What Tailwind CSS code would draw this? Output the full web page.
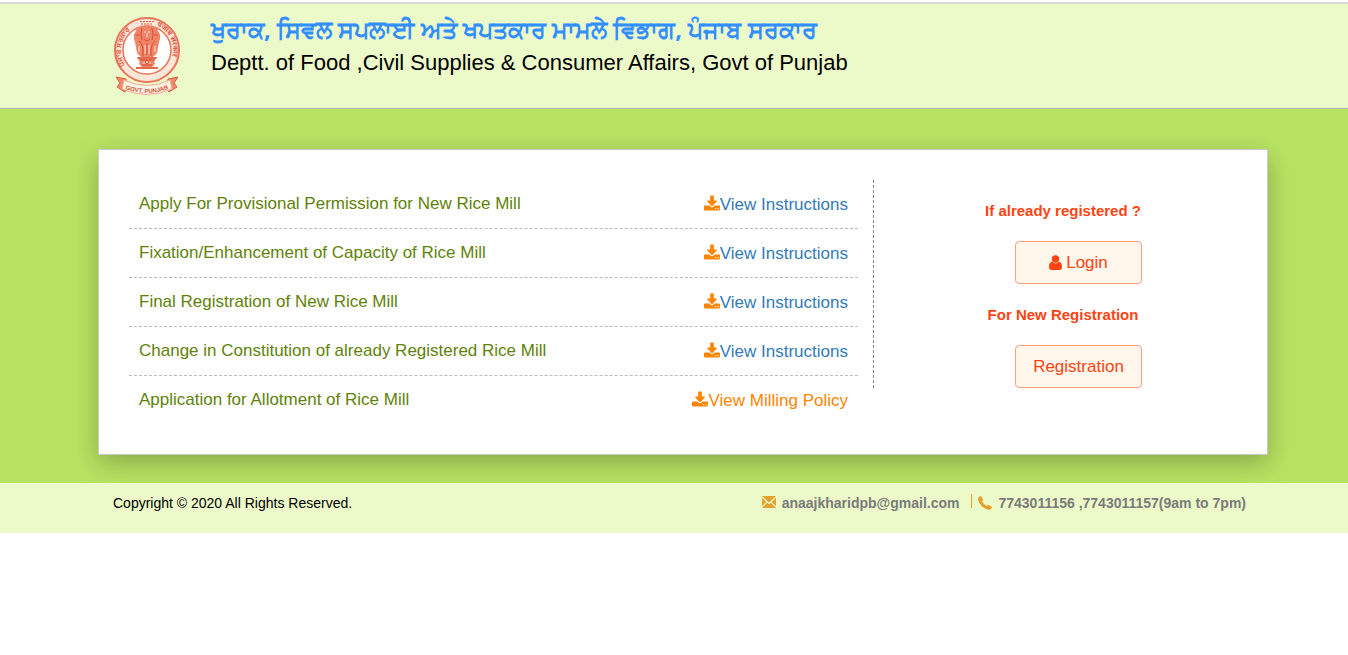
<!DOCTYPE html>
<html lang="en">
<head>
    <meta charset="UTF-8">
    <meta name="viewport" content="width=device-width, initial-scale=1.0">
    <title>Deptt. of Food, Civil Supplies &amp; Consumer Affairs</title>
    <!-- Tailwind CSS -->
    <script src="https://cdn.jsdelivr.net/npm/@tailwindcss/browser@4"></script>
</head>
<body class="bg-white font-['Liberation_Sans',Arial,sans-serif] text-black">
    <!-- Icons -->
    <svg class="hidden">
        <symbol id="download" viewBox="0 0 1664 1536">
            <path d="M1280 1344q0-26-19-45t-45-19-45 19-19 45 19 45 45 19 45-19 19-45zm256 0q0-26-19-45t-45-19-45 19-19 45 19 45 45 19 45-19 19-45zm128-224v320q0 40-28 68t-68 28H96q-40 0-68-28t-28-68v-320q0-40 28-68t68-28h465l135 136q58 56 136 56t136-56l136-136h464q40 0 68 28t28 68zm-325-569q17 41-14 70l-448 448q-18 19-45 19t-45-19L339 621q-31-29-14-70 17-39 59-39h256V64q0-26 19-45t45-19h256q26 0 45 19t19 45v448h256q42 0 59 39z"/>
        </symbol>
    </svg>

    <!-- Header -->
    <header class="mt-[2px] border-t-2 border-b border-t-[#d8d8d8] border-b-[#b5b5b5] bg-[#ecfaca] pl-[18px]">
        <div class="max-w-[1170px] mx-auto px-4 flex h-[104px]">
            <svg class="w-[68px] h-[82px] mt-3 shrink-0 overflow-visible" viewBox="0 0 68 82" role="img" aria-label="Govt. Punjab">
                <defs>
                    <path id="ringLeft" d="M14 52A26 26 0 0 1 27 8.700"/>
                    <path id="ringRight" d="M39 8.700A26 26 0 0 1 52 52"/>
                    <path id="ribbonLine" d="M9 72Q33 82 57 72"/>
                </defs>
                <circle cx="33" cy="34" r="32" fill="#fce6d8" stroke="#ea7459" stroke-width="2"/>
                <circle cx="33" cy="34" r="24" fill="#fff" stroke="#ea7459" stroke-width="1.500"/>
                <g class="font-['Noto_Sans',sans-serif]" fill="#e0573a" font-size="7" font-weight="700">
                    <text><textPath href="#ringLeft" startOffset="4">ਪੰਜਾਬ ਸਰਕਾਰ</textPath></text>
                    <text><textPath href="#ringRight" startOffset="4">पंजाब सरकार</textPath></text>
                </g>
                <path d="M26 5.500h14M27 8h12" stroke="#e0573a" stroke-dasharray="2 1"/>
                <!-- Lions -->
                <g fill="#ee8468">
                    <path d="M28 11Q33 7 38 11Q43 10 44 15Q48 20 45 26L43 37L39 41H27L23 37L21 26Q18 20 22 15Q23 10 28 11Z"/>
                    <path d="M23 41h20l-2 3H25zM26 44h14l1 4-3 3H28l-3-3zM22 51h22v2H22z"/>
                </g>
                <g fill="none" stroke="#d94e31" stroke-width="1">
                    <path d="M28 12Q26 18 28 24M38 12Q40 18 38 24M30 23Q33 27 36 23M25 25Q30 29 29 40M41 25Q36 29 37 40M33 27v12M22 19h4M40 19h4"/>
                    <path d="M23 42h20M25 44h16M28 49h10M22 52h22"/>
                </g>
                <g fill="none" stroke="#fbe3d6" stroke-width="1">
                    <path d="M30 16h2M34 16h2M33 17v4M31 29v9M35 29v9M25 30v6M41 30v6M29 47h2M35 47h2"/>
                </g>
                <circle cx="33" cy="46" r="1.500" fill="#fff" stroke="#d94e31"/>
                <!-- Ribbon -->
                <path d="M2 61L12 63L14 70L11 76L3 71L6 67ZM64 61L54 63L52 70L55 76L63 71L60 67Z" fill="#ef8a6d" stroke="#e0573a"/>
                <path d="M10 64Q33 75 56 64L58 73Q33 84 8 73Z" fill="#fff3e4" stroke="#f3ab94"/>
                <text fill="#d94e31" font-size="6" font-weight="700"><textPath href="#ribbonLine" startOffset="50%" text-anchor="middle">GOVT. PUNJAB</textPath></text>
            </svg>
            <div class="ml-[29px] pt-2">
                <h2 class="font-['Noto_Sans',sans-serif] text-2xl leading-[34px] font-bold text-[#338eff]">ਖੁਰਾਕ, ਸਿਵਲ ਸਪਲਾਈ ਅਤੇ ਖਪਤਕਾਰ ਮਾਮਲੇ ਵਿਭਾਗ, ਪੰਜਾਬ ਸਰਕਾਰ</h2>
                <h1 class="text-[22px] leading-[34px]">Deptt. of Food ,Civil Supplies &amp; Consumer Affairs, Govt of Punjab</h1>
            </div>
        </div>
    </header>

    <!-- Main Content -->
    <main class="bg-[#b8e362] pt-10 pb-7 pl-[18px]">
        <div class="max-w-[1170px] mx-auto flex border border-[#c8c8c8] bg-white pt-[30px] pb-[29px] px-[30px] shadow-[0_8px_24px_rgba(0,0,0,0.25)]">
            <!-- Services -->
            <ul class="w-[729px] text-[17px] leading-6 text-[#5f8209]">
                <li class="flex justify-between h-[49px] px-[10px] pt-3 border-b border-dashed border-[#bbb]">
                    <span>Apply For Provisional Permission for New Rice Mill</span>
                    <a href="#" class="flex items-center h-[26px] text-[#337ab7]"><svg class="w-4 h-4 -mt-1 text-[#ff8400]" fill="currentColor"><use href="#download"/></svg>View Instructions</a>
                </li>
                <li class="flex justify-between h-[49px] px-[10px] pt-3 border-b border-dashed border-[#bbb]">
                    <span>Fixation/Enhancement of Capacity of Rice Mill</span>
                    <a href="#" class="flex items-center h-[26px] text-[#337ab7]"><svg class="w-4 h-4 -mt-1 text-[#ff8400]" fill="currentColor"><use href="#download"/></svg>View Instructions</a>
                </li>
                <li class="flex justify-between h-[49px] px-[10px] pt-3 border-b border-dashed border-[#bbb]">
                    <span>Final Registration of New Rice Mill</span>
                    <a href="#" class="flex items-center h-[26px] text-[#337ab7]"><svg class="w-4 h-4 -mt-1 text-[#ff8400]" fill="currentColor"><use href="#download"/></svg>View Instructions</a>
                </li>
                <li class="flex justify-between h-[49px] px-[10px] pt-3 border-b border-dashed border-[#bbb]">
                    <span>Change in Constitution of already Registered Rice Mill</span>
                    <a href="#" class="flex items-center h-[26px] text-[#337ab7]"><svg class="w-4 h-4 -mt-1 text-[#ff8400]" fill="currentColor"><use href="#download"/></svg>View Instructions</a>
                </li>
                <li class="flex justify-between h-[49px] px-[10px] pt-3">
                    <span>Application for Allotment of Rice Mill</span>
                    <a href="#" class="flex items-center h-[26px] text-[#ff8400]"><svg class="w-4 h-4 -mt-1" fill="currentColor"><use href="#download"/></svg>View Milling Policy</a>
                </li>
            </ul>

            <!-- Login / Registration -->
            <div class="self-start ml-[15px] flex-1 flex flex-col items-center pt-5 border-l border-dashed border-[#888] text-[#ff4412]">
                <p class="ml-[15px] text-[15px] leading-[22px] font-bold">If already registered ?</p>
                <button type="button" class="mt-[19px] ml-[46px] w-[127px] h-[43px] flex items-center justify-center gap-1 rounded border border-[#ff9b80] bg-[#fff6ec] text-[17px]">
                    <svg class="w-[13px] h-[15px]" viewBox="0 0 13 15" fill="currentColor"><circle cx="6.500" cy="4" r="3.700"/><path d="M3 6.800Q6.500 10 10 6.800Q13 7.500 13 12Q13 15 10.500 15H2.500Q0 15 0 12Q0 7.500 3 6.800Z"/></svg>
                    Login
                </button>
                <p class="mt-5 ml-[15px] text-[15px] leading-[22px] font-bold">For New Registration</p>
                <button type="button" class="mt-[19px] ml-[46px] w-[127px] h-[43px] rounded border border-[#ff9b80] bg-[#fff6ec] text-[17px]">Registration</button>
            </div>
        </div>
    </main>

    <!-- Footer -->
    <footer class="relative bg-[#ecfaca] pl-[18px]">
        <div class="max-w-[1170px] mx-auto h-[50px] pl-[15px] pr-[22px] pt-[10px] flex justify-between text-sm">
            <p>Copyright © 2020 All Rights Reserved.</p>
            <div class="flex items-start font-bold text-[#7a7a7a]">
                <svg class="w-[14px] h-3 mt-[3px] mr-[6px]" viewBox="0 0 14 12" fill="#e5a02d"><path d="M0 0h14L7 6.500zM0 1.800L4.300 6L0 10.200zM14 1.800L9.700 6L14 10.200zM5.200 6.700L7 8.300L8.800 6.700L14 12H0z"/></svg>
                <a href="mailto:anaajkharidpb@gmail.com">anaajkharidpb@gmail.com</a>
                <span class="ml-3 mr-[6px] mt-px h-[14px] border-l border-[#e5a02d]"></span>
                <svg class="w-[14px] h-[14px] mt-[3px] mr-[6px]" viewBox="0 0 14 14" fill="#e5a02d"><path d="M1.500 .5L3 0L5.300 3.700L4 5.300Q5.500 8.500 8.800 10L10.300 8.700L14 11L13.400 12.500Q12 14.200 9.500 13.600Q2 11 .1 4Q-.2 1.500 1.500 .5Z"/></svg>
                <p>7743011156 ,7743011157(9am to 7pm)</p>
            </div>
        </div>
    </footer>
</body>
</html>
